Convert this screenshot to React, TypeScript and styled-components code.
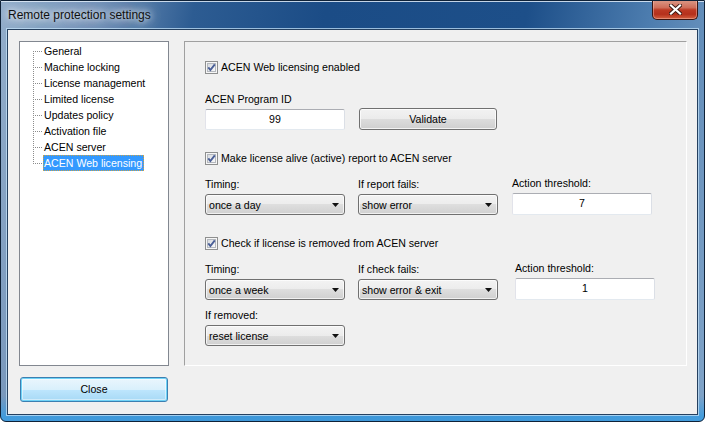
import React from "react";
import styled, { createGlobalStyle } from "styled-components";

const GlobalStyle = createGlobalStyle`
  html, body {
    margin: 0;
    padding: 0;
    background: #ffffff;
  }
  body {
    font-family: "Liberation Sans", Arial, sans-serif;
    font-size: 10.6px;
    color: #000;
  }
`;

const treeItems = [
  "General",
  "Machine locking",
  "License management",
  "Limited license",
  "Updates policy",
  "Activation file",
  "ACEN server",
  "ACEN Web licensing",
];

const CheckMark = () => (
  <svg width="13" height="13" viewBox="0 0 13 13">
    <defs>
      <linearGradient id="cbfill" x1="0" y1="0" x2="1" y2="1">
        <stop offset="0" stopColor="#d6d9de" />
        <stop offset="1" stopColor="#fbfbfb" />
      </linearGradient>
    </defs>
    <rect x="0.5" y="0.5" width="12" height="12" fill="#f6f6f6" stroke="#8e8f8f" />
    <rect x="2.5" y="2.5" width="8" height="8" fill="url(#cbfill)" stroke="#b4b8be" />
    <path d="M3.3 6.4 L5.4 9 L9.8 3.4" fill="none" stroke="#4a5f97" strokeWidth="1.9" />
  </svg>
);

const Arrow = () => (
  <svg width="7" height="4" viewBox="0 0 7 4">
    <path d="M0 0 H7 L3.5 4 Z" fill="#111" />
  </svg>
);

const CloseGlyph = () => (
  <svg width="13" height="11" viewBox="0 0 13 11">
    <path d="M2 1.5 L11 9.5 M11 1.5 L2 9.5" stroke="#3b1a14" strokeWidth="4" strokeLinecap="square" />
    <path d="M2 1.5 L11 9.5 M11 1.5 L2 9.5" stroke="#ffffff" strokeWidth="2.2" strokeLinecap="square" />
  </svg>
);

const App = () => {
  return (
    <>
      <GlobalStyle />
      <Window>
        <TitleBar>
          <Title>Remote protection settings</Title>
          <CaptionClose>
            <CloseGlyph />
          </CaptionClose>
        </TitleBar>
        <Client>
          <TopRow>
            <Tree>
              {treeItems.map((item, i) => (
                <TreeRow key={item}>
                  <Branch
                    $pos={i === 0 ? "first" : i === treeItems.length - 1 ? "last" : "mid"}
                  />
                  <TreeLabel $selected={i === treeItems.length - 1}>{item}</TreeLabel>
                </TreeRow>
              ))}
            </Tree>
            <Panel>
              <CheckRow>
                <CheckMark />
                <span>ACEN Web licensing enabled</span>
              </CheckRow>
              <PlainLabel>ACEN Program ID</PlainLabel>
              <IdRow>
                <TextBox>99</TextBox>
                <PushButton>Validate</PushButton>
              </IdRow>
              <CheckRow $top={22}>
                <CheckMark />
                <span>Make license alive (active) report to ACEN server</span>
              </CheckRow>
              <FieldGrid>
                <Field>
                  <FieldLabel>Timing:</FieldLabel>
                  <ComboBox>
                    <span>once a day</span>
                    <Arrow />
                  </ComboBox>
                </Field>
                <Field>
                  <FieldLabel>If report fails:</FieldLabel>
                  <ComboBox>
                    <span>show error</span>
                    <Arrow />
                  </ComboBox>
                </Field>
                <Field $nudge={1}>
                  <FieldLabel>Action threshold:</FieldLabel>
                  <TextBox $tall>7</TextBox>
                </Field>
              </FieldGrid>
              <CheckRow $top={22}>
                <CheckMark />
                <span>Check if license is removed from ACEN server</span>
              </CheckRow>
              <FieldGrid>
                <Field>
                  <FieldLabel>Timing:</FieldLabel>
                  <ComboBox>
                    <span>once a week</span>
                    <Arrow />
                  </ComboBox>
                </Field>
                <Field>
                  <FieldLabel>If check fails:</FieldLabel>
                  <ComboBox>
                    <span>show error &amp; exit</span>
                    <Arrow />
                  </ComboBox>
                </Field>
                <Field $nudge={4}>
                  <FieldLabel>Action threshold:</FieldLabel>
                  <TextBox $tall>1</TextBox>
                </Field>
                <Field>
                  <FieldLabel>If removed:</FieldLabel>
                  <ComboBox>
                    <span>reset license</span>
                    <Arrow />
                  </ComboBox>
                </Field>
              </FieldGrid>
            </Panel>
          </TopRow>
          <DialogButton>Close</DialogButton>
        </Client>
      </Window>
    </>
  );
};
export default App;

const Window = styled.div`
  width: 705px;
  height: 422px;
  box-sizing: border-box;
  border: 1px solid #0f2238;
  border-radius: 0 0 6px 6px;
  display: flex;
  flex-direction: column;
  overflow: hidden;
  background:
    linear-gradient(to bottom, rgba(64, 156, 222, 0) 94%, rgba(64, 156, 222, 0.95) 99%),
    linear-gradient(100deg, #93aecb 0%, #6f90b7 13%, #2d5c92 25%, #1b4c86 42%, #1d4f89 68%, #4d7daf 84%, #82a5c9 100%);
`;

const TitleBar = styled.div`
  height: 28px;
  flex-shrink: 0;
  display: flex;
  align-items: flex-start;
  justify-content: space-between;
  box-shadow: inset 0 1px 0 rgba(225, 236, 248, 0.85);
`;

const Title = styled.span`
  margin: 6px 0 0 7px;
  font-size: 12px;
  line-height: 16px;
  color: #101010;
  text-shadow:
    0 0 6px rgba(255, 255, 255, 0.95),
    0 0 12px rgba(255, 255, 255, 0.8),
    0 0 18px rgba(255, 255, 255, 0.6);
`;

const CaptionClose = styled.div`
  width: 46px;
  height: 20px;
  margin: -1px 6px 0 0;
  box-sizing: border-box;
  border: 1px solid #3b1410;
  border-top: none;
  border-radius: 0 0 5px 5px;
  display: flex;
  align-items: center;
  justify-content: center;
  background: linear-gradient(
    to bottom,
    #dc9a88 0%,
    #cf6e5a 40%,
    #bd3a24 52%,
    #b5301c 75%,
    #d4603f 100%
  );
  box-shadow: inset 0 0 0 1px rgba(255, 210, 200, 0.4);
`;

const Client = styled.div`
  flex: 1;
  margin: 0 6px 6px;
  border: 1px solid #25405f;
  box-shadow: 0 0 0 1px rgba(195, 225, 248, 0.75);
  background: #f0f0f0;
  display: flex;
  flex-direction: column;
  padding: 11px 10px 12px 11px;
`;

const TopRow = styled.div`
  flex: 1;
  display: flex;
  gap: 15px;
`;

const Tree = styled.div`
  width: 150px;
  box-sizing: border-box;
  border: 1px solid #828790;
  background: #fff;
  padding: 1px 0 0 13px;
`;

const TreeRow = styled.div`
  display: flex;
  align-items: center;
  height: 16px;
`;

const Branch = styled.span<{ $pos: "first" | "mid" | "last" }>`
  width: 10px;
  height: 16px;
  flex-shrink: 0;
  background-image:
    repeating-linear-gradient(to right, #8c8c8c 0 1px, transparent 1px 2px),
    repeating-linear-gradient(to bottom, #8c8c8c 0 1px, transparent 1px 2px);
  background-repeat: no-repeat;
  background-size: ${({ $pos }) =>
    $pos === "mid" ? "10px 1px, 1px 16px" : $pos === "first" ? "10px 1px, 1px 8px" : "10px 1px, 1px 9px"};
  background-position: ${({ $pos }) => ($pos === "first" ? "0 8px, 0 8px" : "0 8px, 0 0")};
`;

const TreeLabel = styled.span<{ $selected?: boolean }>`
  height: 16px;
  line-height: 16px;
  padding: 0 2px 0 1px;
  box-sizing: border-box;
  white-space: nowrap;
  color: ${({ $selected }) => ($selected ? "#fff" : "#000")};
  background: ${({ $selected }) => ($selected ? "#3399ff" : "transparent")};
  outline: ${({ $selected }) => ($selected ? "1px dotted #c9a24a" : "none")};
  outline-offset: -1px;
`;

const Panel = styled.div`
  flex: 1;
  border: 1px solid;
  border-color: #a0a0a0 #ffffff #ffffff #a0a0a0;
  padding: 19px 20px 0 20px;
  display: flex;
  flex-direction: column;
  align-items: flex-start;
`;

const CheckRow = styled.div<{ $top?: number }>`
  display: flex;
  align-items: center;
  gap: 3px;
  height: 13px;
  line-height: 13px;
  margin-top: ${({ $top }) => $top ?? 0}px;
  white-space: nowrap;
`;

const PlainLabel = styled.div`
  margin-top: 18px;
  line-height: 14px;
`;

const IdRow = styled.div`
  margin-top: 2px;
  height: 22px;
  display: flex;
  align-items: center;
  gap: 14px;
`;

const TextBox = styled.div<{ $tall?: boolean }>`
  width: 140px;
  height: ${({ $tall }) => ($tall ? 22 : 21)}px;
  box-sizing: border-box;
  border: 1px solid;
  border-color: #abadb3 #dbdfe6 #e3e9ef #e2e3ea;
  border-radius: 2px;
  background: #fff;
  text-align: center;
  line-height: ${({ $tall }) => ($tall ? 19 : 18)}px;
`;

const PushButton = styled.div`
  width: 138px;
  height: 22px;
  box-sizing: border-box;
  border: 1px solid #707070;
  border-radius: 3px;
  background: linear-gradient(to bottom, #f2f2f2 0%, #ebebeb 50%, #dddddd 50%, #cfcfcf 100%);
  box-shadow: inset 0 0 0 1px rgba(255, 255, 255, 0.75);
  text-align: center;
  line-height: 20px;
`;

const FieldGrid = styled.div`
  margin-top: 11px;
  display: grid;
  grid-template-columns: 140px 140px 140px;
  column-gap: 13px;
  row-gap: 8px;
  align-items: end;
`;

const Field = styled.div<{ $nudge?: number }>`
  display: flex;
  flex-direction: column;
  margin-left: ${({ $nudge }) => $nudge ?? 0}px;
`;

const FieldLabel = styled.div`
  line-height: 14px;
  margin-bottom: 3px;
  white-space: nowrap;
`;

const ComboBox = styled.div`
  width: 140px;
  height: 21px;
  box-sizing: border-box;
  border: 1px solid #707070;
  border-radius: 3px;
  padding: 0 5px 0 3px;
  display: flex;
  align-items: center;
  justify-content: space-between;
  background: linear-gradient(to bottom, #f3f3f3 0%, #ececec 50%, #dedede 50%, #d0d0d0 100%);
  box-shadow: inset 0 0 0 1px rgba(255, 255, 255, 0.7);
  white-space: nowrap;
`;

const DialogButton = styled.div`
  margin: 11px 0 0 1px;
  width: 148px;
  height: 25px;
  box-sizing: border-box;
  border: 1px solid #3c7fb1;
  border-radius: 3px;
  background: linear-gradient(to bottom, #eaf6fd 0%, #d9f0fc 50%, #bee6fd 50%, #a7d9f5 100%);
  box-shadow: inset 0 0 0 1px #6fd3f7, inset 0 0 0 2px rgba(255, 255, 255, 0.45);
  text-align: center;
  line-height: 23px;
`;
